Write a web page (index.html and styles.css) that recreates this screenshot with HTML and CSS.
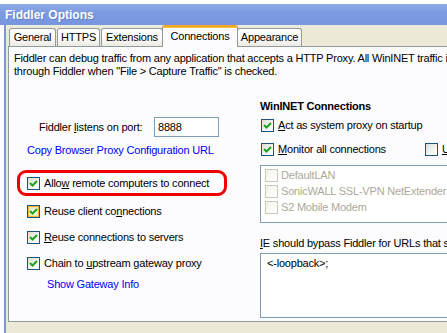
FILE: index.html
```html
<!DOCTYPE html>
<html lang="en">
<head>
    <meta charset="UTF-8">
    <title>Fiddler Options</title>
    <link rel="stylesheet" href="styles.css">
</head>
<body>
    <div class="window">
        <div class="titlebar">Fiddler Options</div>
        <div class="client">
            <div class="tabs">
                <div class="tab w-general">General</div>
                <div class="tab w-https">HTTPS</div>
                <div class="tab w-ext">Extensions</div>
                <div class="tab selected">Connections</div>
                <div class="tab w-app">Appearance</div>
            </div>
            <div class="panel">
                <p class="intro">Fiddler can debug traffic from any application that accepts a HTTP Proxy. All WinINET traffic is routed<br>through Fiddler when "File &gt; Capture Traffic" is checked.</p>
                <div class="cols">
                    <div class="left">
                        <div class="port-row">
                            <span class="port-label">Fiddler <u>l</u>istens on port:</span>
                            <div class="input">8888</div>
                        </div>
                        <a class="link copy-link">Copy Browser Proxy Configuration URL</a>

                        <div class="highlight">
                            <div class="check-row">
                                <span class="cb on"><svg viewBox="0 0 11 11"><polyline points="2,5 4.5,7.5 9,3"/></svg></span>
                                <span>Allo<u>w</u> remote computers to connect</span>
                            </div>
                        </div>
                        <div class="check-row">
                            <span class="cb on hover"><svg viewBox="0 0 11 11"><polyline points="2,5 4.5,7.5 9,3"/></svg></span>
                            <span>Reuse client co<u>n</u>nections</span>
                        </div>
                        <div class="check-row">
                            <span class="cb on"><svg viewBox="0 0 11 11"><polyline points="2,5 4.5,7.5 9,3"/></svg></span>
                            <span><u>R</u>euse connections to servers</span>
                        </div>
                        <div class="check-row">
                            <span class="cb on"><svg viewBox="0 0 11 11"><polyline points="2,5 4.5,7.5 9,3"/></svg></span>
                            <span>Chain to <u>u</u>pstream gateway proxy</span>
                        </div>
                        <a class="link gateway-link">Show Gateway Info</a>
                    </div>

                    <div class="right">
                        <div class="heading">WinINET Connections</div>
                        <div class="check-row tall">
                            <span class="cb on"><svg viewBox="0 0 11 11"><polyline points="2,5 4.5,7.5 9,3"/></svg></span>
                            <span><u>A</u>ct as system proxy on startup</span>
                        </div>
                        <div class="check-row tall">
                            <div class="monitor">
                                <span class="cb on"><svg viewBox="0 0 11 11"><polyline points="2,5 4.5,7.5 9,3"/></svg></span>
                                <span><u>M</u>onitor all connections</span>
                            </div>
                            <span class="cb"></span>
                            <span class="nowrap"><u>U</u>se PAC Script</span>
                        </div>
                        <div class="listbox">
                            <div class="list-item"><span class="cb off"></span><span>DefaultLAN</span></div>
                            <div class="list-item"><span class="cb off"></span><span>SonicWALL SSL-VPN NetExtender</span></div>
                            <div class="list-item"><span class="cb off"></span><span>S2 Mobile Modem</span></div>
                        </div>
                        <div class="bypass-label"><u>I</u>E should bypass Fiddler for URLs that start with:</div>
                        <div class="textarea">&lt;-loopback&gt;;</div>
                    </div>
                </div>
            </div>
        </div>
    </div>
</body>
</html>
```

FILE: styles.css
```css
body {
    margin: 0;
    padding-top: 4px;
    width: 447px;
    height: 329px;
    overflow: hidden;
    background-color: #fff;
    font-family: "Liberation Sans", Arial, sans-serif;
    font-size: 11px;
    letter-spacing: -0.2px;
    color: #000;
}

.window {
    margin-left: 4px;
    border-left: 2px solid #7b96df;
    width: 520px;
    height: 100%;
    background-color: #ece9d8;
}

.titlebar {
    height: 21px;
    line-height: 22px;
    margin-left: -6px;
    padding-left: 5px;
    background: linear-gradient(to bottom, #8fadea, #7b9ae0 40%, #7896df);
    color: #fff;
    font-weight: bold;
    font-size: 12px;
    letter-spacing: 0;
    text-shadow: 1px 1px 0 #6580c9;
}

.client {
    padding-left: 2px;
}

/* tab strip */
.tabs {
    display: flex;
    align-items: flex-end;
    height: 21px;
    padding-left: 1px;
    position: relative;
    z-index: 1;
}

.tab {
    height: 17px;
    line-height: 17px;
    margin-right: 1px;
    text-align: center;
    border: 1px solid #919b9c;
    border-bottom: none;
    border-radius: 3px 3px 0 0;
    background: linear-gradient(to bottom, #fff, #fcfcfb 50%, #eceae3);
}

.w-general { width: 45px; }
.w-https { width: 41px; }
.w-ext { width: 60px; }
.w-app { width: 63px; }

.tab.selected {
    width: 74px;
    height: 20px;
    line-height: 19px;
    margin: 0 -1px -1px -2px;
    background: #fcfcfe;
    border-top: 2px solid #f5a623;
    box-shadow: inset 0 1px 0 #ffc83c;
}

.tab.selected + .tab {
    margin-left: 0;
}

.panel {
    height: 276px;
    border: 1px solid #919b9c;
    border-right: none;
    background-color: #fcfcfe;
    padding: 5px 0 0 5px;
    box-sizing: border-box;
}

.intro {
    margin: 0;
    line-height: 13px;
    white-space: nowrap;
}

.nowrap {
    white-space: nowrap;
}

.cols {
    display: grid;
    grid-template-columns: 246px 240px;
    margin-top: 20px;
}

/* left column */
.port-row {
    display: flex;
    align-items: center;
    margin-top: 19px;
    padding-left: 25px;
}

.port-label {
    width: 115px;
}

.input {
    width: 60px;
    height: 18px;
    line-height: 18px;
    padding-left: 3px;
    border: 1px solid #7f9db9;
    background: #fff;
}

.link {
    display: block;
    color: #0000ff;
    line-height: 13px;
}

.copy-link {
    margin: 7px 0 0 13px;
}

.highlight {
    width: 197px;
    height: 20px;
    margin: 13px 0 2px 3px;
    border: 3px solid #ee0000;
    border-radius: 9px;
    padding-left: 7px;
    display: flex;
    align-items: center;
}

.left > .check-row {
    height: 26px;
    padding-left: 13px;
}

.check-row {
    display: flex;
    align-items: center;
}

.check-row .cb {
    margin-right: 4px;
}

.gateway-link {
    margin: 2px 0 0 33px;
}

/* checkbox */
.cb {
    display: inline-block;
    flex: none;
    width: 11px;
    height: 11px;
    border: 1px solid #1c5180;
    background: linear-gradient(135deg, #dcdcd7, #fff 85%);
}

.cb svg {
    display: block;
    width: 11px;
    height: 11px;
    fill: none;
    stroke: #21a121;
    stroke-width: 2;
}

.cb.hover {
    box-shadow: inset 0 0 0 1px #f8b636, inset 0 0 0 2px #fce6a0;
}

.cb.off {
    border-color: #cac8bb;
    background: linear-gradient(135deg, #f0efe8, #fff 85%);
}

/* right column */
.heading {
    font-weight: bold;
    line-height: 13px;
    margin-top: 2px;
}

.right .check-row.tall {
    height: 24px;
    padding-left: 1px;
}

.right .check-row.tall:first-of-type {
    margin-top: 2px;
}

.monitor {
    display: flex;
    align-items: center;
    flex: none;
    width: 164px;
}

.listbox {
    margin-top: 4px;
    height: 56px;
    border: 1px solid #7f9db9;
    background: #fff;
    padding-left: 4px;
}

.list-item {
    display: flex;
    align-items: center;
    height: 16px;
    color: #aca899;
}

.list-item .cb {
    margin-right: 3px;
}

.list-item:first-child {
    margin-top: 1px;
}

.bypass-label {
    margin-top: 14px;
    line-height: 13px;
    white-space: nowrap;
}

.textarea {
    margin-top: 3px;
    height: 57px;
    border: 1px solid #7f9db9;
    background: #fff;
    padding: 3px 6px;
    line-height: 13px;
}
```
